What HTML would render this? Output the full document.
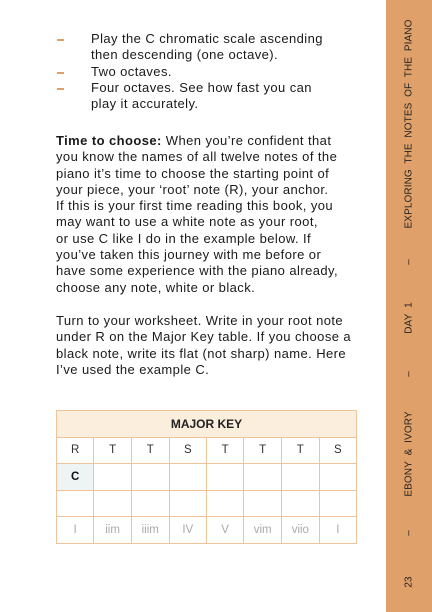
<!DOCTYPE html>
<html><head><meta charset="utf-8"><style>
body{margin:0;width:432px;height:612px;background:#fff;position:relative;overflow:hidden;font-family:"Liberation Sans",sans-serif;color:#1a1a1a}
.t{position:absolute;left:56px;font-size:13px;letter-spacing:0.42px;line-height:16.3px;white-space:nowrap}
.d{position:absolute;left:57px;width:7px;height:2px;background:#e0a06a}
.side{position:absolute;left:386px;top:0;width:46px;height:612px;background:#e0a06a}
.s{position:absolute;left:409px;font-size:10px;color:#222;transform:translate(-50%,-50%) rotate(-90deg);white-space:nowrap;letter-spacing:0.1px}
table{position:absolute;left:56px;top:410px;width:301px;border-collapse:collapse;font-size:11.5px}
td{border:1.5px solid #f0c49a;height:25.5px;text-align:center;padding:0;width:37.5px;color:#333}
.h td{background:#fbeedd;font-weight:bold;color:#222;font-size:12px}
.g td{color:#aaa}
</style></head><body>
<div class="d" style="top:39px"></div><div class="d" style="top:72px"></div><div class="d" style="top:88px"></div>
<div class="t" style="left:91px;top:31px">Play the C chromatic scale ascending<br>then descending (one octave).<br>Two octaves.<br>Four octaves. See how fast you can<br>play it accurately.</div>
<div class="t" style="top:133px"><b>Time to choose:</b> When you’re confident that<br>you know the names of all twelve notes of the<br>piano it’s time to choose the starting point of<br>your piece, your ‘root’ note (R), your anchor.<br>If this is your first time reading this book, you<br>may want to use a white note as your root,<br>or use C like I do in the example below. If<br>you’ve taken this journey with me before or<br>have some experience with the piano already,<br>choose any note, white or black.</div>
<div class="t" style="top:313px">Turn to your worksheet. Write in your root note<br>under R on the Major Key table. If you choose a<br>black note, write its flat (not sharp) name. Here<br>I’ve used the example C.</div>
<table>
<tr class="h"><td colspan="8">MAJOR KEY</td></tr>
<tr><td>R</td><td>T</td><td>T</td><td>S</td><td>T</td><td>T</td><td>T</td><td>S</td></tr>
<tr><td style="background:#eef3f3;font-weight:bold;color:#111">C</td><td></td><td></td><td></td><td></td><td></td><td></td><td></td></tr>
<tr><td></td><td></td><td></td><td></td><td></td><td></td><td></td><td></td></tr>
<tr class="g"><td>I</td><td>iim</td><td>iiim</td><td>IV</td><td>V</td><td>vim</td><td>viio</td><td>I</td></tr>
</table>
<div class="side"></div>
<div class="s" style="top:124px">EXPLORING&nbsp; THE&nbsp; NOTES&nbsp; OF&nbsp; THE&nbsp; PIANO</div>
<div class="s" style="top:262px">–</div>
<div class="s" style="top:318px">DAY&nbsp; 1</div>
<div class="s" style="top:374px">–</div>
<div class="s" style="top:454px">EBONY&nbsp; &amp;&nbsp; IVORY</div>
<div class="s" style="top:533px">–</div>
<div class="s" style="top:582px">23</div>
</body></html>
